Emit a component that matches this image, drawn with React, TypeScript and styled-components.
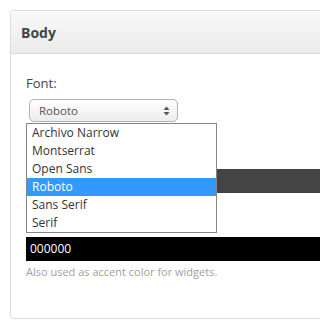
import React from 'react';
import styled, { createGlobalStyle } from 'styled-components';

const Global = createGlobalStyle`
  html, body { margin: 0; padding: 0; background: #fff; overflow: hidden; }
  body { font-family: "Open Sans", "Liberation Sans", sans-serif; color: #444; }
`;

const Page = styled.div`
  box-sizing: border-box;
  width: 100%;
  overflow: hidden;
  padding: 10px 0 0 10px;
`;

const Panel = styled.section`
  box-sizing: border-box;
  width: calc(100% + 40px);
  height: 309px;
  border: 1px solid #dcdcdc;
  border-radius: 4px;
  background: #fff;
`;

const Header = styled.header`
  box-sizing: border-box;
  height: 43px;
  display: flex;
  align-items: center;
  padding-left: 10px;
  border-bottom: 1px solid #d8d8d8;
  border-radius: 4px 4px 0 0;
  box-shadow: inset 0 1px 0 #fff;
  background: linear-gradient(#f9f9f9, #ebebeb);
`;

const Title = styled.h2`
  margin: 0;
  font-size: 14px;
  font-weight: 700;
  color: #444;
  line-height: 19px;
`;

const Body = styled.div`
  padding: 20px 0 0 15px;
`;

const Group = styled.div<{ $gap?: number }>`
  margin-top: ${(p) => p.$gap ?? 0}px;
`;

const Label = styled.label`
  display: block;
  font-size: 13px;
  line-height: 18px;
  color: #444;
  margin-bottom: 7px;
`;

const LabelSpace = styled.div`
  height: 18px;
  margin-bottom: 7px;
`;

const SelectWrap = styled.div`
  position: relative;
  margin-left: 3px;
  width: 149px;
`;

const SelectBox = styled.div`
  box-sizing: border-box;
  height: 23px;
  border: 1px solid #b4b4b4;
  border-radius: 5px;
  background: linear-gradient(#ffffff, #ececec);
  display: flex;
  align-items: center;
  justify-content: space-between;
  padding: 0 7px 0 9px;
  font-size: 11.5px;
  color: #555;
`;

const Arrows = styled.svg`
  width: 7px;
  height: 10px;
`;

const List = styled.ul`
  position: absolute;
  top: calc(100% + 1px);
  left: -3px;
  width: 191px;
  box-sizing: border-box;
  margin: 0;
  padding: 0;
  list-style: none;
  border: 1px solid #868686;
  background: #fff;
  z-index: 2;
`;

const Item = styled.li<{ $active?: boolean }>`
  height: 18px;
  line-height: 18px;
  padding-left: 5px;
  font-size: 12px;
  color: ${(p) => (p.$active ? '#fff' : '#333')};
  background: ${(p) => (p.$active ? '#3399ff' : 'transparent')};
`;

const ColorInput = styled.div<{ $bg: string }>`
  box-sizing: border-box;
  height: 24px;
  background: ${(p) => p.$bg};
  color: #fff;
  font-size: 12px;
  line-height: 24px;
  padding-left: 4px;
`;

const Help = styled.p`
  margin: 2px 0 0;
  font-size: 11px;
  line-height: 17px;
  color: #a0a0a0;
`;

const fonts = ['Archivo Narrow', 'Montserrat', 'Open Sans', 'Roboto', 'Sans Serif', 'Serif'];

export default function App() {
  return (
    <>
      <Global />
      <Page>
        <Panel>
          <Header>
            <Title>Body</Title>
          </Header>
          <Body>
            <Group>
              <Label>Font:</Label>
              <SelectWrap>
                <SelectBox>
                  <span>Roboto</span>
                  <Arrows viewBox="0 0 7 10">
                    <path d="M3.5 0.5 L6.5 4 L0.5 4 Z" fill="#555" />
                    <path d="M3.5 9.5 L6.5 6 L0.5 6 Z" fill="#555" />
                  </Arrows>
                </SelectBox>
                <List>
                  {fonts.map((f) => (
                    <Item key={f} $active={f === 'Roboto'}>
                      {f}
                    </Item>
                  ))}
                </List>
              </SelectWrap>
            </Group>
            <Group $gap={22}>
              <LabelSpace />
              <ColorInput $bg="#444444" />
            </Group>
            <Group $gap={19}>
              <LabelSpace />
              <ColorInput $bg="#000000">000000</ColorInput>
              <Help>Also used as accent color for widgets.</Help>
            </Group>
          </Body>
        </Panel>
      </Page>
    </>
  );
}
